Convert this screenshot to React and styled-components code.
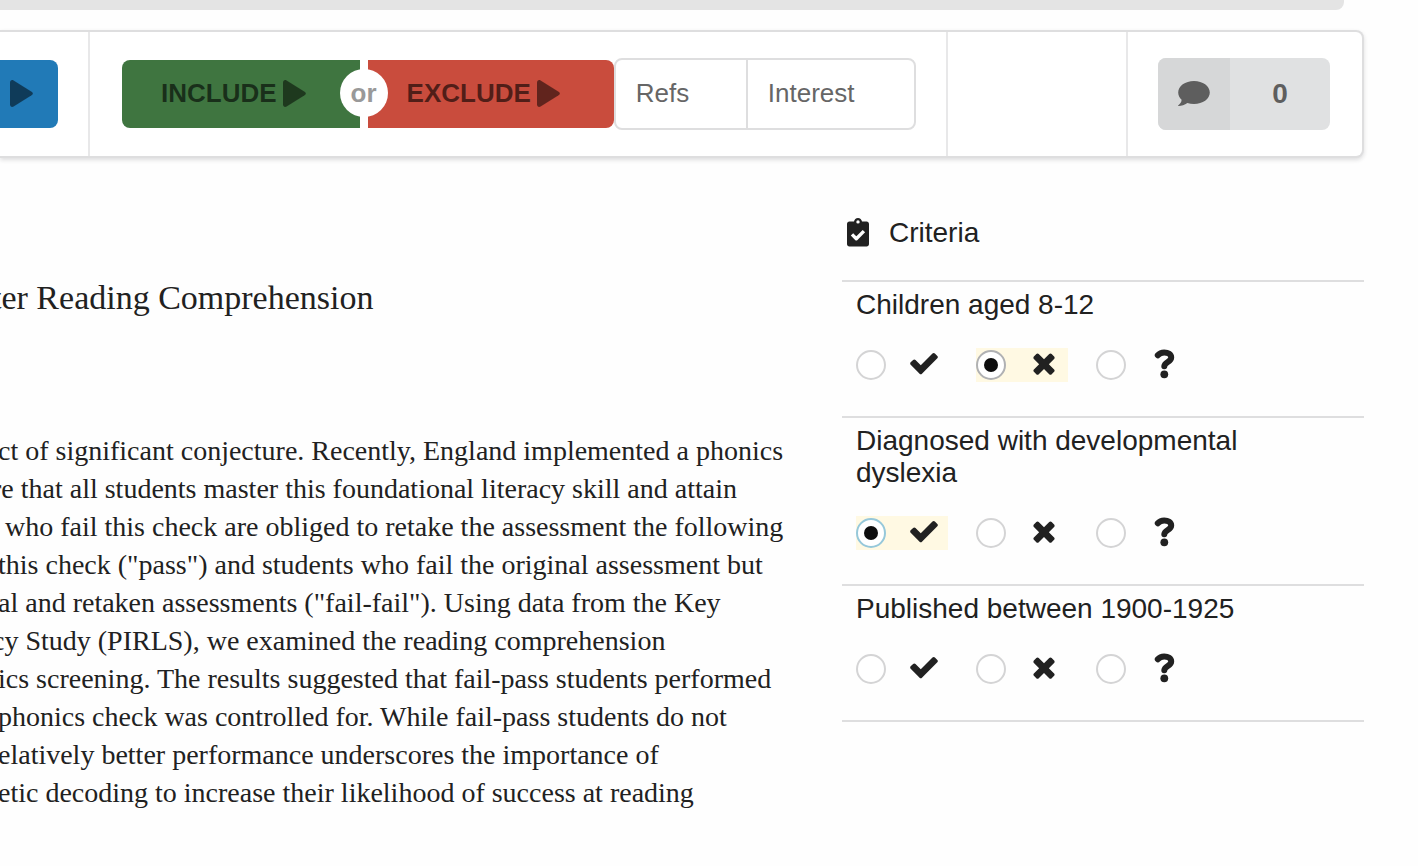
import React, { useState } from "react";
import styled, { createGlobalStyle, css } from "styled-components";

const GlobalStyle = createGlobalStyle`
  * { box-sizing: border-box; }
  body {
    margin: 0;
    background: #fefefe;
    color: #212121;
    font-family: "Liberation Sans", Arial, sans-serif;
    font-size: 28px;
    overflow-x: hidden;
  }
  button { font-family: inherit; border: 0; margin: 0; cursor: pointer; }
  svg { display: block; flex: none; }
`;

const Page = styled.div`
  padding-right: 54px;
`;

const ProgressTrack = styled.div`
  height: 10px;
  margin-right: 20px;
  background: #e4e4e4;
  border-bottom-right-radius: 8px;
`;

const Toolbar = styled.div`
  display: flex;
  margin-top: 20px;
  border: 2px solid #dededf;
  border-left: 0;
  border-radius: 0 8px 8px 0;
  box-shadow: 0 2px 4px rgba(34, 36, 38, 0.15);
  background: #fff;
`;

const Section = styled.div`
  display: flex;
  align-items: center;
  min-height: 124px;
  padding: ${(p) => p.$pad || "0"};
  flex: ${(p) => (p.$grow ? "1" : "none")};
  border-right: ${(p) => (p.$last ? "0" : "2px solid #e8e8e9")};
`;

const ActionButton = styled.button`
  display: flex;
  align-items: center;
  gap: 6px;
  height: 68px;
  padding: 0 54px 2px 39px;
  font-size: 26px;
  font-weight: bold;
  color: rgba(0, 0, 0, 0.6);
  background: ${(p) => p.$color};
  border-radius: ${(p) => p.$radius};
  svg { opacity: 0.85; }
`;

const NextButton = styled(ActionButton)`
  padding: 0 25px 2px 10px;
`;

const Decision = styled.div`
  display: grid;
  grid-template-columns: auto 8px auto;
`;

const Or = styled.span`
  align-self: center;
  justify-self: center;
  display: flex;
  align-items: center;
  justify-content: center;
  width: 48px;
  height: 48px;
  margin: 0 -20px 2px;
  z-index: 1;
  border-radius: 50%;
  background: #fff;
  color: #999;
  font-size: 26px;
  font-weight: bold;
`;

const Tags = styled.div`
  display: flex;
  height: 72px;
  border: 2px solid #dededf;
  border-radius: 8px;
`;

const Tag = styled.button`
  width: ${(p) => p.$width};
  padding: 0 20px 2px;
  background: transparent;
  color: #666;
  font-size: 26px;
  text-align: left;
  & + & { border-left: 2px solid #dededf; }
`;

const CommentButton = styled.button`
  display: flex;
  height: 72px;
  padding: 0;
  overflow: hidden;
  border-radius: 8px;
  background: #e0e1e2;
  color: #5e5e5e;
  font-size: 28px;
  font-weight: bold;
`;

const CommentIcon = styled.span`
  display: flex;
  align-items: center;
  justify-content: center;
  width: 72px;
  height: 100%;
  background: #d6d7d8;
`;

const CommentCount = styled.span`
  width: 100px;
  align-self: center;
  text-align: center;
`;

const Main = styled.main`
  display: flex;
`;

const Article = styled.article`
  flex: 1;
  min-width: 0;
  padding-top: 120px;
  margin-left: -2px;
  font-family: "Liberation Serif", "Times New Roman", serif;
  white-space: pre;
`;

const Title = styled.h1`
  margin: 0 0 114px -6px;
  font-size: 34px;
  font-weight: normal;
  line-height: 40px;
`;

const Abstract = styled.p`
  margin: 0;
  font-size: 28px;
  line-height: 38px;
`;

const Line = styled.span`
  display: block;
  margin-left: ${(p) => (p.$cut ? "-6px" : "0")};
`;

const Sidebar = styled.aside`
  flex: 0 0 522px;
  padding-top: 55px;
`;

const SidebarTitle = styled.h2`
  display: flex;
  align-items: center;
  gap: 20px;
  margin: 0 0 27px;
  padding-left: 5px;
  font-size: 28px;
  font-weight: normal;
  line-height: 40px;
  svg { margin-bottom: 2px; }
`;

const Criterion = styled.fieldset`
  margin: 0;
  padding: 7px 14px 34px;
  border: 0;
  border-top: 2px solid #dededf;
  &:last-child { border-bottom: 2px solid #dededf; }
`;

const CriterionName = styled.legend`
  float: left;
  width: 100%;
  max-width: 440px;
  margin-bottom: 27px;
  padding: 0;
  line-height: 32px;
`;

const Options = styled.div`
  clear: both;
  display: flex;
  gap: 28px;
`;

const Option = styled.label`
  display: flex;
  align-items: center;
  gap: 14px;
  width: 92px;
  height: 34px;
  cursor: pointer;
  ${(p) => p.$checked && css`background: #fff9e3;`}
`;

const Radio = styled.input`
  appearance: none;
  flex: none;
  display: grid;
  place-items: center;
  width: 30px;
  height: 30px;
  margin: 0;
  border: 2px solid #d4d4d5;
  border-radius: 50%;
  background: #fff;
  &:checked { border-color: ${(p) => (p.$active ? "#96c8da" : "#b0b1b3")}; }
  &:checked::before {
    content: "";
    width: 14px;
    height: 14px;
    border-radius: 50%;
    background: #0d0d0d;
  }
`;

const Mark = styled.span`
  display: flex;
  justify-content: center;
  width: 48px;
  padding-bottom: 4px;
`;

const PlayIcon = () => (
  <svg width="23" height="27" viewBox="0 0 23 27" fill="currentColor" aria-hidden="true">
    <path d="M0 2.6C0 .5 1.8-.5 3.6.5l18 11.2c1.6 1 1.6 2.6 0 3.6l-18 11.2C1.8 27.5 0 26.500 0 24.400Z" />
  </svg>
);

const SpeechIcon = () => (
  <svg width="32" height="26" viewBox="0 0 32 26" fill="currentColor" aria-hidden="true">
    <path d="M16 0C24.800 0 31.800 5.100 31.800 11.500S24.800 23 16 23c-2.400 0-4.600-.4-6.600-1C6.600 24 3.600 24.900.6 25.100c-.6 0-.7-.6-.2-.9 1.900-1.300 3.100-3.100 3.200-5.400C1.500 16.900.2 14.300.2 11.500.2 5.100 7.200 0 16 0Z" />
  </svg>
);

const ClipboardIcon = () => (
  <svg width="22" height="29" viewBox="0 0 22 29" aria-hidden="true">
    <path fill="#212121" fillRule="evenodd" d="M2.400 3.600H7C7.300 1.500 8.900 0 11 0s3.700 1.500 4 3.600h4.600C21 3.600 22 4.600 22 6v20c0 1.400-1 2.400-2.400 2.400H2.400C1 28.400 0 27.400 0 26V6c0-1.400 1-2.400 2.400-2.400ZM11 2.200a1.700 1.700 0 1 0 0 3.400 1.700 1.700 0 0 0 0-3.400Z" />
    <path fill="none" stroke="#fff" strokeWidth="3.400" strokeLinejoin="round" d="m5 16.400 4.300 4.300 7.600-7.600" />
  </svg>
);

const CheckIcon = () => (
  <svg width="32" height="32" viewBox="0 0 1792 1792" fill="currentColor" aria-hidden="true">
    <path d="M1671 566q0 40-28 68l-724 724-136 136q-28 28-68 28t-68-28l-136-136-362-362q-28-28-28-68t28-68l136-136q28-28 68-28t68 28l294 295 656-657q28-28 68-28t68 28l136 136q28 28 28 68z" />
  </svg>
);

const CrossIcon = () => (
  <svg width="32" height="32" viewBox="0 0 1792 1792" fill="currentColor" aria-hidden="true">
    <path d="M1490 1322q0 40-28 68l-136 136q-28 28-68 28t-68-28l-294-294-294 294q-28 28-68 28t-68-28l-136-136q-28-28-28-68t28-68l294-294-294-294q-28-28-28-68t28-68l136-136q28-28 68-28t68 28l294 294 294-294q28-28 68-28t68 28l136 136q28 28 28 68t-28 68l-294 294 294 294q28 28 28 68z" />
  </svg>
);

const HelpIcon = () => (
  <svg width="32" height="32" viewBox="0 0 32 32" aria-hidden="true">
    <path fill="none" stroke="currentColor" strokeWidth="6" strokeLinecap="round" d="M9.800 8.300C11.500 6.300 13.300 5.500 16.200 5.500c4 0 7 1.700 7 5 0 4.500-6.500 4.300-6.900 8.700" />
    <circle cx="16.300" cy="27.300" r="3.900" fill="currentColor" />
  </svg>
);

const OPTIONS = [
  { value: "yes", label: "Meets criterion", Icon: CheckIcon },
  { value: "no", label: "Does not meet criterion", Icon: CrossIcon },
  { value: "unsure", label: "Unsure", Icon: HelpIcon },
];

const CRITERIA = [
  { id: "age", name: "Children aged 8-12", initial: "no" },
  { id: "diagnosis", name: "Diagnosed with developmental dyslexia", initial: "yes", active: true },
  { id: "published", name: "Published between 1900-1925", initial: "" },
];

const ABSTRACT = [
  { text: "ct of significant conjecture. Recently, England implemented a phonics" },
  { text: "re that all students master this foundational literacy skill and attain", cut: true },
  { text: " who fail this check are obliged to retake the assessment the following" },
  { text: "this check (\"pass\") and students who fail the original assessment but" },
  { text: "al and retaken assessments (\"fail-fail\"). Using data from the Key" },
  { text: "cy Study (PIRLS), we examined the reading comprehension", cut: true },
  { text: "ics screening. The results suggested that fail-pass students performed" },
  { text: "phonics check was controlled for. While fail-pass students do not" },
  { text: "elatively better performance underscores the importance of" },
  { text: "etic decoding to increase their likelihood of success at reading" },
];

function CriterionRow({ id, name, initial, active }) {
  const [value, setValue] = useState(initial);
  return (
    <Criterion>
      <CriterionName>{name}</CriterionName>
      <Options>
        {OPTIONS.map(({ value: v, label, Icon }) => (
          <Option key={v} $checked={value === v}>
            <Radio
              type="radio"
              name={id}
              value={v}
              aria-label={label}
              checked={value === v}
              $active={active}
              onChange={() => setValue(v)}
            />
            <Mark><Icon /></Mark>
          </Option>
        ))}
      </Options>
    </Criterion>
  );
}

export default function App() {
  return (
    <>
      <GlobalStyle />
      <Page>
        <ProgressTrack />
        <Toolbar>
          <Section $pad="0 30px 0 0">
            <NextButton $color="#217ab7" $radius="0 8px 8px 0" aria-label="Next">
              <PlayIcon />
            </NextButton>
          </Section>
          <Section $pad="0 30px 0 32px">
            <Decision>
              <ActionButton $color="#3f7540" $radius="8px 0 0 8px">INCLUDE<PlayIcon /></ActionButton>
              <Or>or</Or>
              <ActionButton $color="#c94c3d" $radius="0 8px 8px 0">EXCLUDE<PlayIcon /></ActionButton>
            </Decision>
            <Tags>
              <Tag $width="130px">Refs</Tag>
              <Tag $width="168px">Interest</Tag>
            </Tags>
          </Section>
          <Section $grow />
          <Section $pad="0 32px 0 30px" $last>
            <CommentButton aria-label="Comments: 0">
              <CommentIcon><SpeechIcon /></CommentIcon>
              <CommentCount>0</CommentCount>
            </CommentButton>
          </Section>
        </Toolbar>
        <Main>
          <Article>
            <Title>ter Reading Comprehension</Title>
            <Abstract>
              {ABSTRACT.map(({ text, cut }) => <Line key={text} $cut={cut}>{text}</Line>)}
            </Abstract>
          </Article>
          <Sidebar>
            <SidebarTitle><ClipboardIcon />Criteria</SidebarTitle>
            {CRITERIA.map((c) => <CriterionRow key={c.id} {...c} />)}
          </Sidebar>
        </Main>
      </Page>
    </>
  );
}
